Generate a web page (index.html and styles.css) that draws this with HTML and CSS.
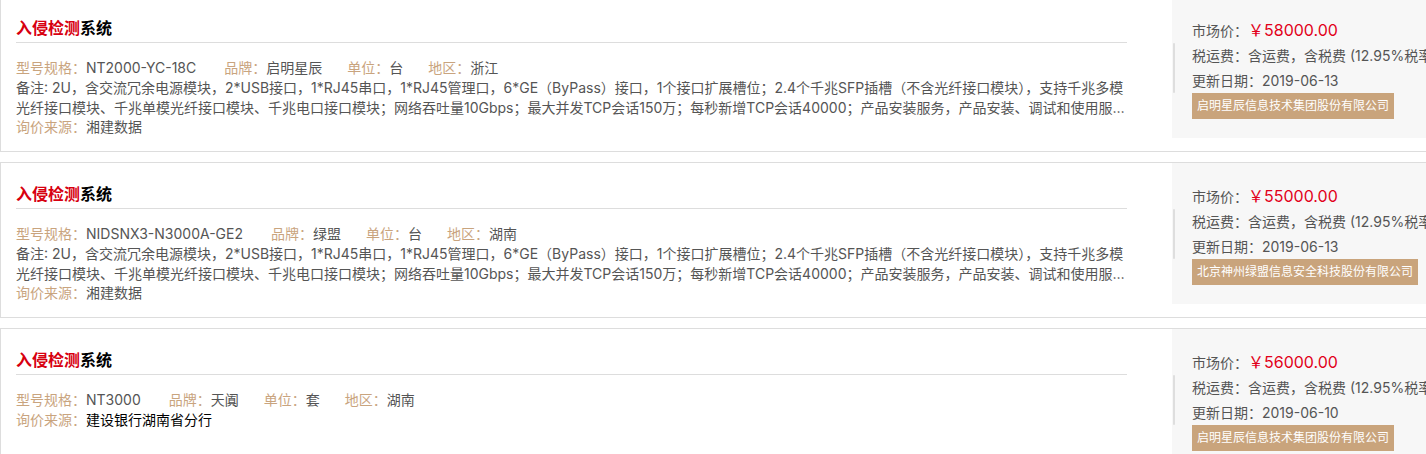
FILE: index.html
```html
<!DOCTYPE html>
<html lang="zh-CN">
<head>
<meta charset="utf-8">
<title>入侵检测系统</title>
<link rel="stylesheet" href="styles.css">
</head>
<body>
<div class="list">
  <div class="card">
    <div class="info">
      <div class="title"><span class="hl">入侵检测</span>系统</div>
      <div class="spec">
        <span class="item first"><span class="lbl">型号规格：</span>NT2000-YC-18C</span>
        <span class="item"><span class="lbl">品牌：</span>启明星辰</span>
        <span class="item"><span class="lbl">单位：</span>台</span>
        <span class="item"><span class="lbl">地区：</span>浙江</span>
      </div>
      <div class="remark">备注: 2U，含交流冗余电源模块，2*USB接口，1*RJ45串口，1*RJ45管理口，6*GE（ByPass）接口，1个接口扩展槽位；2.4个千兆SFP插槽（不含光纤接口模块），支持千兆多模光纤接口模块、千兆单模光纤接口模块、千兆电口接口模块；网络吞吐量10Gbps；最大并发TCP会话150万；每秒新增TCP会话40000；产品安装服务，产品安装、调试和使用服务，产品培训服务，原厂质保服务</div>
      <div class="source"><span class="lbl">询价来源：</span>湘建数据</div>
    </div>
    <div class="panel">
      <div class="price-line">市场价：<span class="price">￥58000.00</span></div>
      <div class="pline">税运费：含运费，含税费 (12.95%税率)</div>
      <div class="pline">更新日期：2019-06-13</div>
      <div class="badge">启明星辰信息技术集团股份有限公司</div>
    </div>
  </div>

  <div class="card">
    <div class="info">
      <div class="title"><span class="hl">入侵检测</span>系统</div>
      <div class="spec">
        <span class="item first"><span class="lbl">型号规格：</span>NIDSNX3-N3000A-GE2</span>
        <span class="item"><span class="lbl">品牌：</span>绿盟</span>
        <span class="item"><span class="lbl">单位：</span>台</span>
        <span class="item"><span class="lbl">地区：</span>湖南</span>
      </div>
      <div class="remark">备注: 2U，含交流冗余电源模块，2*USB接口，1*RJ45串口，1*RJ45管理口，6*GE（ByPass）接口，1个接口扩展槽位；2.4个千兆SFP插槽（不含光纤接口模块），支持千兆多模光纤接口模块、千兆单模光纤接口模块、千兆电口接口模块；网络吞吐量10Gbps；最大并发TCP会话150万；每秒新增TCP会话40000；产品安装服务，产品安装、调试和使用服务，产品培训服务，原厂质保服务</div>
      <div class="source"><span class="lbl">询价来源：</span>湘建数据</div>
    </div>
    <div class="panel">
      <div class="price-line">市场价：<span class="price">￥55000.00</span></div>
      <div class="pline">税运费：含运费，含税费 (12.95%税率)</div>
      <div class="pline">更新日期：2019-06-13</div>
      <div class="badge">北京神州绿盟信息安全科技股份有限公司</div>
    </div>
  </div>

  <div class="card">
    <div class="info">
      <div class="title"><span class="hl">入侵检测</span>系统</div>
      <div class="spec">
        <span class="item first"><span class="lbl">型号规格：</span>NT3000</span>
        <span class="item"><span class="lbl">品牌：</span>天阗</span>
        <span class="item"><span class="lbl">单位：</span>套</span>
        <span class="item"><span class="lbl">地区：</span>湖南</span>
      </div>
      <div class="source dark"><span class="lbl">询价来源：</span>建设银行湖南省分行</div>
    </div>
    <div class="panel">
      <div class="price-line">市场价：<span class="price">￥56000.00</span></div>
      <div class="pline">税运费：含运费，含税费 (12.95%税率)</div>
      <div class="pline">更新日期：2019-06-10</div>
      <div class="badge">启明星辰信息技术集团股份有限公司</div>
    </div>
  </div>
</div>
</body>
</html>
```

FILE: styles.css
```css
html, body {
  margin: 0;
  padding: 0;
  overflow: hidden;
  background: #fff;
}

body {
  font-family: Inter, "Noto Sans CJK TC", sans-serif;
  font-size: 14px;
  color: #555;
}

.list {
  margin-top: -4px;
  display: flex;
  flex-direction: column;
  gap: 10px;
}

.card {
  display: flex;
  align-items: flex-start;
  width: 1520px;
  height: 154px;
  border: 1px solid #ddd;
}

.info {
  width: 1111px;
  margin-left: 15px;
  flex: none;
}

.title {
  padding-top: 17px;
  height: 28px;
  line-height: 28px;
  font-size: 16px;
  font-weight: bold;
  color: #000;
  border-bottom: 1px solid #ddd;
}

.title .hl {
  color: #d7000f;
}

.spec {
  display: flex;
  margin-top: 15px;
  line-height: 20px;
  white-space: nowrap;
}

.item {
  margin-right: 25px;
}

.item.first {
  margin-right: 28px;
}

.lbl {
  color: #c9a47e;
}

.remark {
  line-height: 19.5px;
  display: -webkit-box;
  -webkit-box-orient: vertical;
  -webkit-line-clamp: 2;
  overflow: hidden;
}

.source {
  line-height: 20px;
}

.source.dark {
  color: #000;
}

.panel {
  position: relative;
  flex: none;
  width: 300px;
  height: 120px;
  margin-left: 45px;
  padding: 21px 0 0 20px;
  background: #f7f7f7;
  white-space: nowrap;
}

.panel::before {
  content: "";
  position: absolute;
  left: 1px;
  top: 46px;
  width: 2px;
  height: 50px;
  border-radius: 1px;
  background: #dedede;
}

.price-line {
  line-height: 25px;
}

.price {
  color: #e2001a;
  font-size: 16px;
}

.pline {
  line-height: 25px;
}

.badge {
  display: inline-block;
  height: 26px;
  line-height: 26px;
  padding: 0 5px;
  background: #c9a47c;
  color: #fff;
  font-size: 12px;
}
```
